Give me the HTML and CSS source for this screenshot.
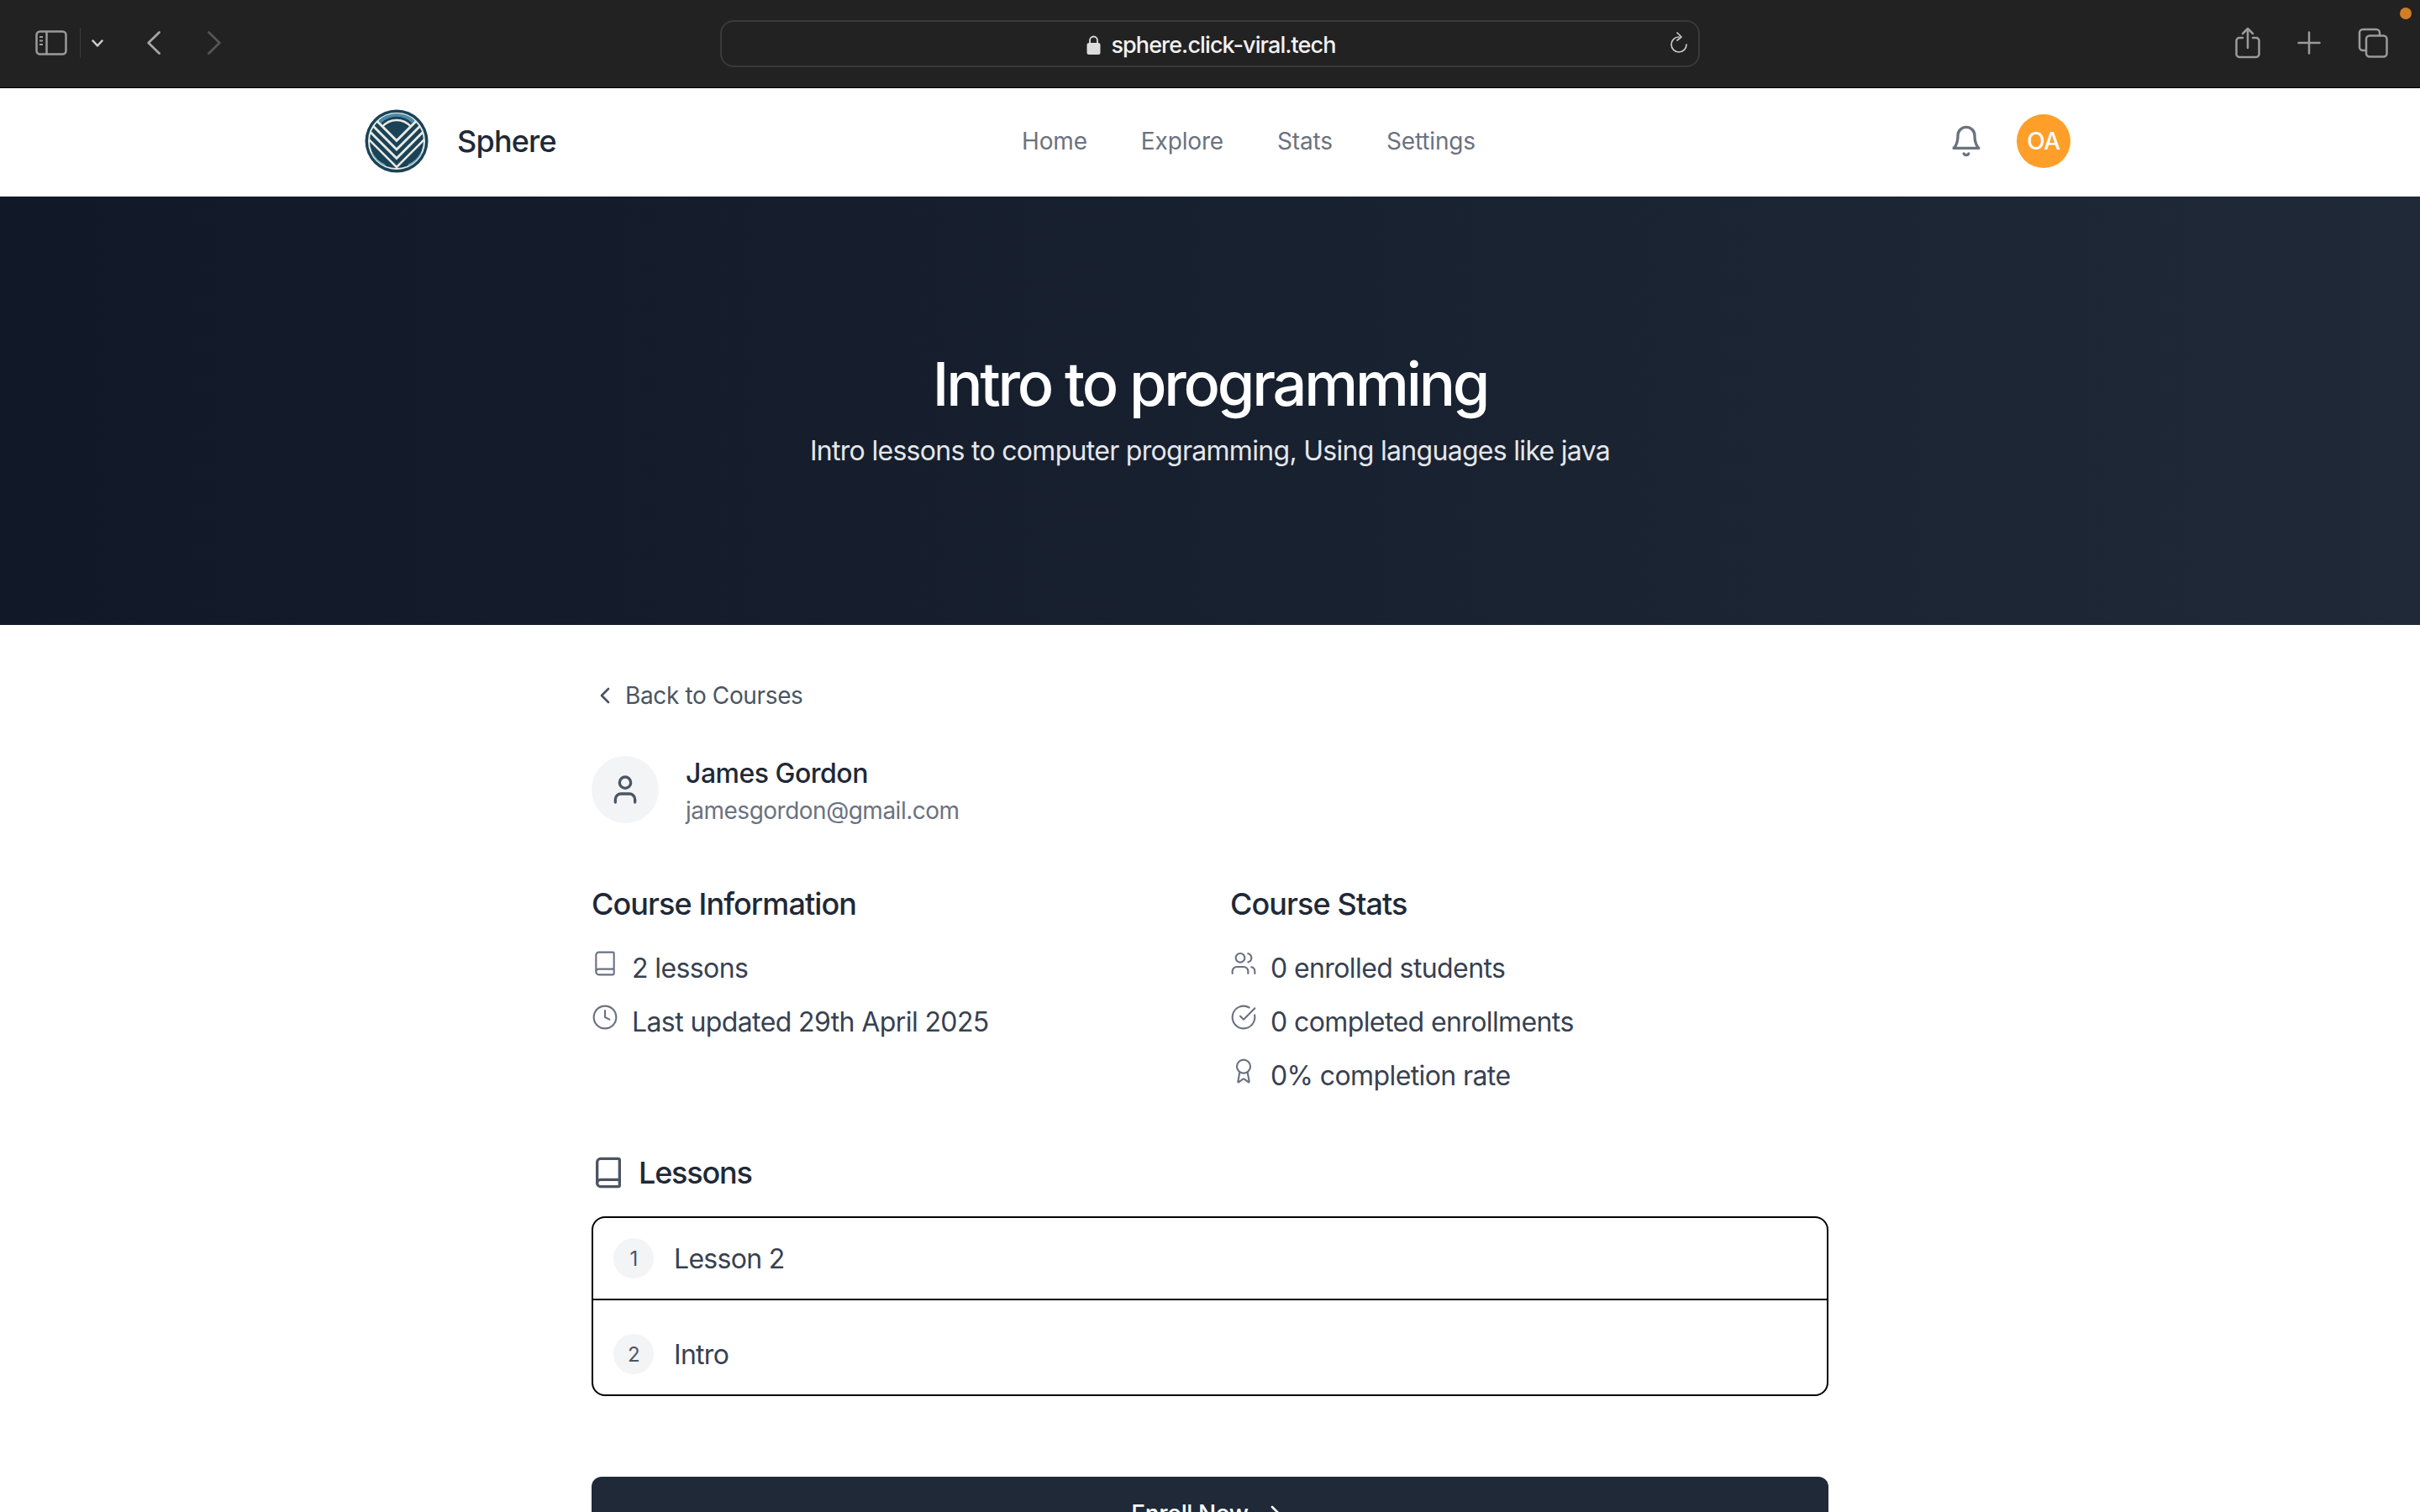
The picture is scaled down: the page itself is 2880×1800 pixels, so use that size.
FILE: index.html

```html
<!DOCTYPE html>
<html>
<head>
  <meta charset="UTF-8">
  <title>Intro to programming</title>
  <link rel="stylesheet" href="styles.css">
</head>
<body>
  <!-- browser chrome -->
  <div class="toolbar">
    <div class="toolbar-left">
      <svg class="tb-sidebar" width="38" height="30" viewBox="0 0 38 30" fill="none" stroke="#9b9b9b" stroke-width="2.5">
        <rect x="1.5" y="1.5" width="35" height="27" rx="4"/>
        <path d="M13.5 1.5v27"/>
        <path d="M5 8h4M5 12.500h4M5 17h4" stroke-width="2"/>
      </svg>
      <span class="tb-divider"></span>
      <svg class="tb-caret" width="14" height="9" viewBox="0 0 14 9" fill="none" stroke="#d0d0d0" stroke-width="2.5" stroke-linecap="round" stroke-linejoin="round">
        <path d="M1.500 1.500 7 7.500l5.500-6"/>
      </svg>
      <svg class="tb-back" width="16" height="28" viewBox="0 0 16 28" fill="none" stroke="#a6a6a6" stroke-width="2.800" stroke-linecap="round" stroke-linejoin="round">
        <path d="M14.500 1.500 1.700 14l12.800 12.500"/>
      </svg>
      <svg class="tb-forward" width="16" height="28" viewBox="0 0 16 28" fill="none" stroke="#555" stroke-width="2.800" stroke-linecap="round" stroke-linejoin="round">
        <path d="M1.500 1.500 14.300 14 1.500 26.500"/>
      </svg>
    </div>
    <div class="urlbar">
      <div class="url">
        <svg width="17" height="23" viewBox="0 0 17 23">
          <path d="M4 10V6a4.500 4.500 0 0 1 9 0v4" fill="none" stroke="#dcdcdc" stroke-width="1.800"/>
          <rect x="0.500" y="9" width="16" height="14" rx="2.500" fill="#dcdcdc"/>
        </svg>
        <span>sphere.click-viral.tech</span>
      </div>
      <svg class="reload" width="22" height="26" viewBox="0 0 22 26" fill="none" stroke="#c9c9c9" stroke-width="1.700" stroke-linecap="round" stroke-linejoin="round">
        <path d="M11 6a9 9 0 1 0 9 9"/>
        <path d="M9 1l5 5-5 4"/>
      </svg>
    </div>
    <div class="toolbar-right">
      <svg width="30" height="38" viewBox="0 0 30 38" fill="none" stroke="#9b9b9b" stroke-width="2.500" stroke-linecap="round" stroke-linejoin="round">
        <path d="M9 13H5a3.500 3.500 0 0 0-3.500 3.500v16A3.500 3.500 0 0 0 5 36h20a3.500 3.500 0 0 0 3.500-3.500v-16A3.500 3.500 0 0 0 25 13h-4"/>
        <path d="M15 25V2M9 8l6-6 6 6"/>
      </svg>
      <svg width="28" height="28" viewBox="0 0 28 28" fill="none" stroke="#9b9b9b" stroke-width="2.500" stroke-linecap="round">
        <path d="M14 1.500v25M1.500 14h25"/>
      </svg>
      <svg width="36" height="36" viewBox="0 0 36 36" fill="none" stroke="#9b9b9b" stroke-width="2.500">
        <path d="M9 27H6a4 4 0 0 1-4-4V6a4 4 0 0 1 4-4h16a4 4 0 0 1 4 4v3"/>
        <rect x="10" y="9.500" width="24.500" height="25" rx="4"/>
      </svg>
    </div>
    <span class="rec-dot"></span>
  </div>

  <nav class="nav">
    <a class="brand">
      <svg width="76" height="76" viewBox="0 0 76 76">
        <defs>
          <clipPath id="logoClip"><circle cx="38" cy="38" r="33"/></clipPath>
        </defs>
        <circle cx="38" cy="38" r="37.500" fill="#1b4257"/>
        <circle cx="38" cy="38" r="33" fill="#1b4257" stroke="#e9ebe4" stroke-width="2"/>
        <g clip-path="url(#logoClip)" fill="none">
          <path d="M18 15A28 28 0 0 1 58 15" stroke="#4a8cab" stroke-width="4.500"/>
          <path d="M21 21A22 22 0 0 1 55 21" stroke="#e9ebe4" stroke-width="2.500"/>
          <path d="M8 52A34 34 0 0 0 24 67M68 52A34 34 0 0 1 52 67" stroke="#6fa7bf" stroke-width="2.500"/>
          <path d="M3 2.500 38 37.500 73 2.500" stroke="#e9ebe4" stroke-width="3"/>
          <path d="M3 13 38 48 73 13" stroke="#e9ebe4" stroke-width="3"/>
          <path d="M3 23.500 38 58.500 73 23.500" stroke="#e9ebe4" stroke-width="3"/>
          <path d="M3 34 38 69 73 34" stroke="#e9ebe4" stroke-width="2.500"/>
        </g>
      </svg>
      <span class="brand-name">Sphere</span>
    </a>
    <div class="nav-links">
      <a>Home</a>
      <a>Explore</a>
      <a>Stats</a>
      <a>Settings</a>
    </div>
    <div class="nav-right">
      <svg class="icon-bell" width="40" height="40" viewBox="0 0 24 24" fill="none" stroke="#6b7280" stroke-width="2" stroke-linecap="round" stroke-linejoin="round">
        <path d="M6 8a6 6 0 0 1 12 0c0 7 3 9 3 9H3s3-2 3-9"/>
        <path d="M10.300 21a1.940 1.940 0 0 0 3.400 0"/>
      </svg>
      <div class="user-badge">OA</div>
    </div>
  </nav>

  <header class="hero">
    <h1>Intro to programming</h1>
    <p>Intro lessons to computer programming, Using languages like java</p>
  </header>

  <main class="content">
    <a class="back-link">
      <svg width="32" height="32" viewBox="0 0 24 24" fill="none" stroke="#4b5563" stroke-width="2" stroke-linecap="round" stroke-linejoin="round">
        <path d="m15 18-6-6 6-6"/>
      </svg>
      Back to Courses
    </a>

    <div class="teacher">
      <div class="teacher-pic">
        <svg width="40" height="40" viewBox="0 0 24 24" fill="none" stroke="#4b5563" stroke-width="2" stroke-linecap="round" stroke-linejoin="round">
          <path d="M19 21v-2a4 4 0 0 0-4-4H9a4 4 0 0 0-4 4v2"/>
          <circle cx="12" cy="7" r="4"/>
        </svg>
      </div>
      <div>
        <div class="teacher-name">James Gordon</div>
        <div class="teacher-mail">jamesgordon@gmail.com</div>
      </div>
    </div>

    <div class="info-grid">
      <section>
        <h3>Course Information</h3>
        <div class="info-row">
          <svg viewBox="0 0 24 24"><path d="M4 19.500v-15A2.500 2.500 0 0 1 6.500 2H19a1 1 0 0 1 1 1v18a1 1 0 0 1-1 1H6.500a2.500 2.500 0 0 1 0-5H20"/></svg>
          <span>2 lessons</span>
        </div>
        <div class="info-row">
          <svg viewBox="0 0 24 24"><circle cx="12" cy="12" r="10"/><path d="M12 6v6l4 2"/></svg>
          <span>Last updated 29th April 2025</span>
        </div>
      </section>
      <section>
        <h3>Course Stats</h3>
        <div class="info-row">
          <svg viewBox="0 0 24 24"><path d="M16 21v-2a4 4 0 0 0-4-4H6a4 4 0 0 0-4 4v2"/><circle cx="9" cy="7" r="4"/><path d="M22 21v-2a4 4 0 0 0-3-3.870"/><path d="M16 3.130a4 4 0 0 1 0 7.750"/></svg>
          <span>0 enrolled students</span>
        </div>
        <div class="info-row">
          <svg viewBox="0 0 24 24"><path d="M21.800 10A10 10 0 1 1 17 3.340"/><path d="m9 11 3 3L22 4"/></svg>
          <span>0 completed enrollments</span>
        </div>
        <div class="info-row">
          <svg viewBox="0 0 24 24"><path d="m15.480 12.890 1.510 8.530a.5.5 0 0 1-.81.470l-3.580-2.690a1 1 0 0 0-1.200 0l-3.590 2.690a.5.5 0 0 1-.81-.470l1.510-8.530"/><circle cx="12" cy="8" r="6"/></svg>
          <span>0% completion rate</span>
        </div>
      </section>
    </div>

    <h3 class="lessons-title">
      <svg width="40" height="40" viewBox="0 0 24 24" fill="none" stroke="#4b5563" stroke-width="2" stroke-linecap="round" stroke-linejoin="round">
        <path d="M4 19.500v-15A2.500 2.500 0 0 1 6.500 2H19a1 1 0 0 1 1 1v18a1 1 0 0 1-1 1H6.500a2.500 2.500 0 0 1 0-5H20"/>
      </svg>
      Lessons
    </h3>

    <div class="lesson-list">
      <div class="lesson">
        <span class="lesson-num">1</span>
        <span>Lesson 2</span>
      </div>
      <div class="lesson">
        <span class="lesson-num">2</span>
        <span>Intro</span>
      </div>
    </div>

    <button class="enroll">
      Enroll Now
      <svg width="32" height="32" viewBox="0 0 24 24" fill="none" stroke="#fff" stroke-width="2" stroke-linecap="round" stroke-linejoin="round">
        <path d="m9 18 6-6-6-6"/>
      </svg>
    </button>
  </main>
</body>
</html>
```

FILE: styles.css

```css
* {
  box-sizing: border-box;
}

html, body {
  height: 100%;
}

body {
  margin: 0;
  overflow: hidden;
  background: #fff;
  font-family: Inter, "Liberation Sans", sans-serif;
  color: #1f2937;
}

h1, h3, p {
  margin: 0;
}

/* browser chrome */
.toolbar {
  position: relative;
  display: flex;
  align-items: flex-start;
  height: 105px;
  background: #222;
  border-bottom: 1px solid #000;
}

.toolbar-left {
  display: flex;
  align-items: center;
  width: 857px;
  height: 102px;
  padding-left: 42px;
}

.tb-divider {
  width: 1px;
  height: 36px;
  margin-left: 15px;
  background: #3c3c3c;
}

.tb-caret {
  margin-left: 13px;
}

.tb-back {
  margin-left: 52px;
}

.tb-forward {
  margin-left: 56px;
}

.urlbar {
  position: relative;
  display: flex;
  justify-content: center;
  align-items: center;
  width: 1166px;
  height: 56px;
  margin-top: 24px;
  border: 2px solid #3a3a3a;
  border-radius: 16px;
}

.url {
  display: flex;
  align-items: center;
  gap: 12px;
  padding: 2px 0 0 3px;
  font-size: 27px;
  font-weight: 500;
  color: #f2f2f2;
  letter-spacing: -0.9px;
}

.reload {
  position: absolute;
  right: 12px;
  top: 12px;
}

.toolbar-right {
  display: flex;
  align-items: center;
  gap: 44px;
  height: 102px;
  margin-left: 637px;
}

.rec-dot {
  position: absolute;
  top: 9px;
  right: 10px;
  width: 14px;
  height: 14px;
  border-radius: 50%;
  background: #d27c24;
}

/* site nav */
.nav {
  display: flex;
  justify-content: space-between;
  align-items: center;
  height: 129px;
  padding: 0 416px 1px 434px;
  border-bottom: 2px solid #f3f4f6;
}

.brand {
  display: flex;
  align-items: center;
  gap: 34px;
}

.brand-name {
  font-size: 36px;
  font-weight: 550;
  letter-spacing: -0.8px;
  color: #1f2937;
}

.nav-links {
  display: flex;
  gap: 64px;
  margin-right: 10px;
  font-size: 28px;
  letter-spacing: -0.15px;
  color: #6b7280;
}

.nav-right {
  display: flex;
  align-items: center;
  gap: 40px;
}

.icon-bell {
  display: block;
}

.user-badge {
  display: flex;
  justify-content: center;
  align-items: center;
  width: 64px;
  height: 64px;
  border-radius: 50%;
  background: #ff9f2a;
  color: #fff;
  font-size: 28px;
  font-weight: 500;
  letter-spacing: -0.5px;
}

/* hero */
.hero {
  display: flex;
  flex-direction: column;
  justify-content: center;
  align-items: center;
  height: 510px;
  background: linear-gradient(to right, #111827, #1f2937);
  color: #fff;
}

.hero h1 {
  font-size: 72px;
  line-height: 80px;
  font-weight: 550;
  letter-spacing: -3.200px;
}

.hero p {
  margin-top: 16px;
  font-size: 32px;
  line-height: 48px;
  letter-spacing: -0.7px;
  color: #e5e7eb;
}

/* page body */
.content {
  width: 1472px;
  margin: 0 auto;
  padding-top: 64px;
}

.back-link {
  display: flex;
  align-items: center;
  gap: 8px;
  height: 40px;
  font-size: 28px;
  letter-spacing: -0.37px;
  color: #4b5563;
}

.teacher {
  display: flex;
  align-items: flex-start;
  gap: 32px;
  margin-top: 51px;
}

.teacher-pic {
  display: flex;
  justify-content: center;
  align-items: center;
  width: 80px;
  height: 80px;
  margin-top: 1px;
  border-radius: 50%;
  background: #f3f4f6;
}

.teacher-name {
  font-size: 32px;
  line-height: 44px;
  font-weight: 500;
  letter-spacing: -0.5px;
}

.teacher-mail {
  font-size: 28px;
  line-height: 44px;
  letter-spacing: -0.5px;
  color: #6b7280;
}

.info-grid {
  display: grid;
  grid-template-columns: 712px 712px;
  gap: 48px;
  margin-top: 61px;
}

.info-grid h3 {
  margin-bottom: 25px;
  font-size: 36px;
  line-height: 56px;
  font-weight: 550;
  letter-spacing: -0.9px;
}

.info-row {
  display: flex;
  gap: 16px;
  margin-top: 16px;
  font-size: 32px;
  line-height: 48px;
  letter-spacing: -0.6px;
  color: #374151;
}

.info-grid h3 + .info-row {
  margin-top: 0;
}

.info-row svg {
  flex: none;
  width: 32px;
  height: 32px;
  margin-top: 2px;
  fill: none;
  stroke: #6b7280;
  stroke-width: 1.600;
  stroke-linecap: round;
  stroke-linejoin: round;
}

.lessons-title {
  display: flex;
  align-items: center;
  gap: 16px;
  height: 56px;
  margin-top: 63px;
  font-size: 36px;
  font-weight: 550;
  letter-spacing: -1.2px;
}

.lesson-list {
  margin-top: 24px;
  border: 2px solid #000;
  border-radius: 16px;
}

.lesson {
  display: flex;
  align-items: center;
  gap: 24px;
  padding: 24px;
  font-size: 32px;
  letter-spacing: -0.7px;
  color: #374151;
}

.lesson + .lesson {
  padding-top: 40px;
  border-top: 2px solid #000;
}

.lesson-num {
  display: flex;
  justify-content: center;
  align-items: center;
  width: 48px;
  height: 48px;
  border-radius: 50%;
  background: #f3f4f6;
  font-size: 24px;
  color: #4b5563;
}

.enroll {
  display: flex;
  justify-content: center;
  align-items: center;
  gap: 16px;
  width: 100%;
  margin-top: 96px;
  padding: 24px;
  border: none;
  border-radius: 12px;
  background: #1f2937;
  color: #fff;
  font-family: inherit;
  font-size: 28px;
  line-height: 40px;
  font-weight: 500;
  letter-spacing: -0.4px;
}
```
